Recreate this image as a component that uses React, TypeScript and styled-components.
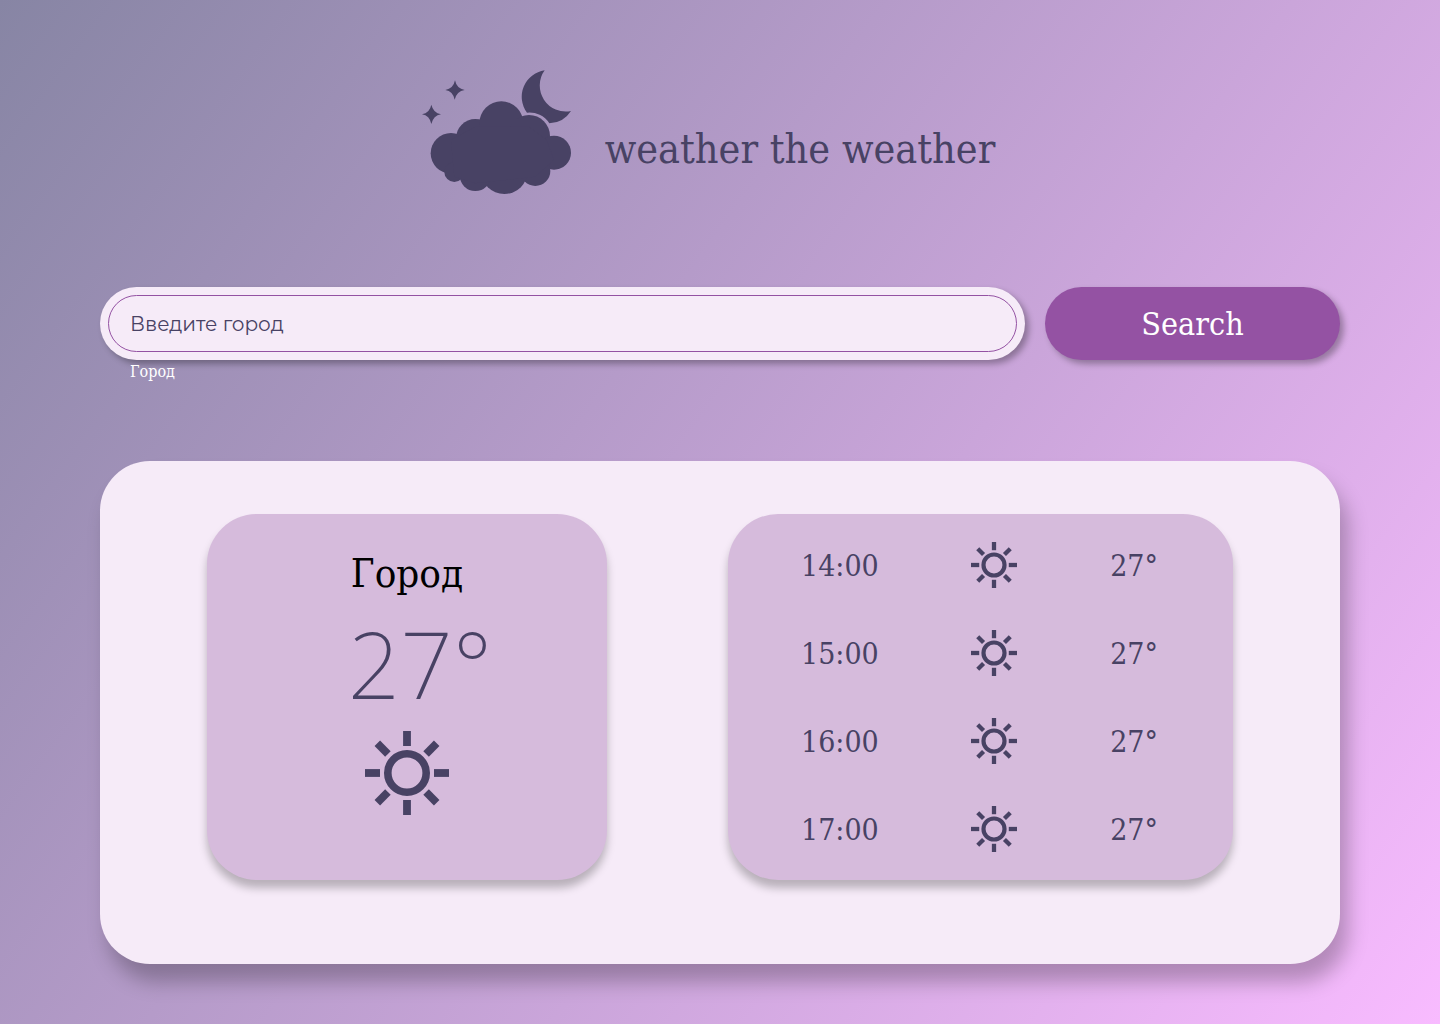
import React, { useState } from 'react';
import styled, { createGlobalStyle } from 'styled-components';

const ink = '#484264';
const pale = '#f6ebf8';
const lilac = '#d6bbdc';
const violet = '#9452a3';
const slab = "'Roboto Slab', 'DejaVu Serif Condensed', 'DejaVu Serif', serif";

const GlobalStyle = createGlobalStyle`
  *, *::before, *::after { box-sizing: border-box; }
  body {
    margin: 0;
    color: ${ink};
    font-family: ${slab};
  }
`;

const Page = styled.div`
  min-height: 100vh;
  padding: 70px 100px 60px;
  background: linear-gradient(126deg, #8785a4 0%, #f8bbff 100%);
`;

const Header = styled.header`
  display: flex;
  justify-content: center;
  align-items: flex-end;
  gap: 34px;
  padding-right: 24px;
  margin-bottom: 93px;
`;

const Brand = styled.h1`
  margin: 0 0 21px;
  font-size: 41px;
  font-weight: 400;
  line-height: 48px;
`;

const SearchForm = styled.form`
  display: grid;
  grid-template-columns: minmax(0, 1fr) 295px;
  column-gap: 20px;
  margin-bottom: 77px;
`;

const Field = styled.div`
  display: flex;
  height: 73px;
  padding: 8px;
  border-radius: 37px;
  background: ${pale};
  box-shadow: 4px 4px 6px rgba(0, 0, 0, 0.3);
`;

const CityInput = styled.input`
  flex: 1;
  min-width: 0;
  padding: 0 21px;
  border: 1px solid ${violet};
  border-radius: 29px;
  outline: none;
  background: transparent;
  color: ${ink};
  font-family: Montserrat, Inter, sans-serif;
  font-size: 20px;

  &::placeholder {
    color: ${ink};
    opacity: 1;
  }
`;

const SearchButton = styled.button`
  height: 73px;
  border: 0;
  border-radius: 37px;
  background: ${violet};
  box-shadow: 4px 4px 6px rgba(0, 0, 0, 0.3);
  color: #fff;
  font-family: ${slab};
  font-size: 32px;
  cursor: pointer;
`;

const CityLabel = styled.label`
  justify-self: start;
  margin-left: 30px;
  color: #fff;
  font-size: 16px;
  line-height: 24px;
`;

const Panel = styled.main`
  display: flex;
  justify-content: space-between;
  padding: 53px 107px 84px;
  border-radius: 50px;
  background: ${pale};
  box-shadow: 8px 18px 20px rgba(0, 0, 0, 0.25);
`;

const Card = styled.section<{ $width: number }>`
  width: ${(p) => p.$width}px;
  min-height: 366px;
  border-radius: 50px;
  background: ${lilac};
  box-shadow: 0 8px 8px rgba(0, 0, 0, 0.25);
`;

const Current = styled(Card)`
  display: flex;
  flex-direction: column;
  align-items: center;
  gap: 17px;
  padding-top: 35px;
`;

const City = styled.h2`
  margin: 0;
  color: #000;
  font-size: 40px;
  font-weight: 400;
  line-height: 48px;
`;

const Degrees = styled.p`
  margin: 0;
  padding-left: 26px;
  font-family: 'Noto Sans', sans-serif;
  font-size: 92px;
  font-weight: 200;
  line-height: 100px;
`;

const Hourly = styled(Card)`
  padding: 7px 75px 7px 73px;
`;

const HourTable = styled.table`
  width: 100%;
  border-collapse: collapse;
  font-size: 30px;
`;

const Hour = styled.th`
  height: 88px;
  padding: 0;
  font-weight: 400;
  text-align: left;
`;

const Sky = styled.td`
  width: 100%;
  padding: 0;
  text-align: center;
`;

const HourTemp = styled.td`
  padding: 0;
  text-align: right;
`;

const Drawing = styled.svg`
  display: inline-block;
  flex: none;
  vertical-align: middle;
`;

function Sun({ size }: { size: number }) {
  return (
    <Drawing width={size} height={size} viewBox="0 0 84 84" role="img" aria-label="sun">
      <circle cx="42" cy="42" r="19.2" fill="none" stroke={ink} strokeWidth="7.6" />
      {[0, 45, 90, 135, 180, 225, 270, 315].map((angle) => (
        <rect key={angle} x="38.1" y="0" width="7.8" height="15" fill={ink} transform={`rotate(${angle} 42 42)`} />
      ))}
    </Drawing>
  );
}

function CloudLogo() {
  return (
    <Drawing width="150" height="124" viewBox="33 30 450 372" fill={ink} aria-hidden="true">
      <circle cx="123" cy="280" r="61" />
      <circle cx="196" cy="235" r="58" />
      <circle cx="274" cy="190" r="66" />
      <circle cx="357" cy="228" r="63" />
      <circle cx="432" cy="278" r="51" />
      <circle cx="376" cy="333" r="45" />
      <circle cx="283" cy="332" r="70" />
      <circle cx="196" cy="346" r="47" />
      <circle cx="133" cy="336" r="30" />
      <path d="M123 240 L196 200 L357 200 L410 240 L432 300 L376 350 L196 370 L133 350 Z" />
      <path d="M404 31 A80 80 0 0 0 351 158 A71 71 0 0 1 418 190 A80 80 0 0 0 483 153 A78 78 0 0 1 404 31 Z" />
      <path d="M135 61 Q140 86 164 90 Q140 94 134 119 Q129 94 106 90 Q130 86 135 61 Z" />
      <path d="M64 134 Q70 159 93 163 Q70 167 64 192 Q59 167 36 163 Q59 159 64 134 Z" />
    </Drawing>
  );
}

const forecast = [
  { time: '14:00', temp: 27 },
  { time: '15:00', temp: 27 },
  { time: '16:00', temp: 27 },
  { time: '17:00', temp: 27 },
];

export default function App() {
  const [city, setCity] = useState('');

  return (
    <>
      <GlobalStyle />
      <Page>
        <Header>
          <CloudLogo />
          <Brand>weather the weather</Brand>
        </Header>
        <SearchForm onSubmit={(e) => e.preventDefault()}>
          <Field>
            <CityInput
              id="city"
              type="text"
              placeholder="Введите город"
              value={city}
              onChange={(e) => setCity(e.target.value)}
            />
          </Field>
          <SearchButton type="submit">Search</SearchButton>
          <CityLabel htmlFor="city">Город</CityLabel>
        </SearchForm>
        <Panel>
          <Current $width={400}>
            <City>Город</City>
            <Degrees>27°</Degrees>
            <Sun size={84} />
          </Current>
          <Hourly $width={505}>
            <HourTable>
              <tbody>
                {forecast.map(({ time, temp }) => (
                  <tr key={time}>
                    <Hour scope="row">{time}</Hour>
                    <Sky><Sun size={46} /></Sky>
                    <HourTemp>{temp}°</HourTemp>
                  </tr>
                ))}
              </tbody>
            </HourTable>
          </Hourly>
        </Panel>
      </Page>
    </>
  );
}
